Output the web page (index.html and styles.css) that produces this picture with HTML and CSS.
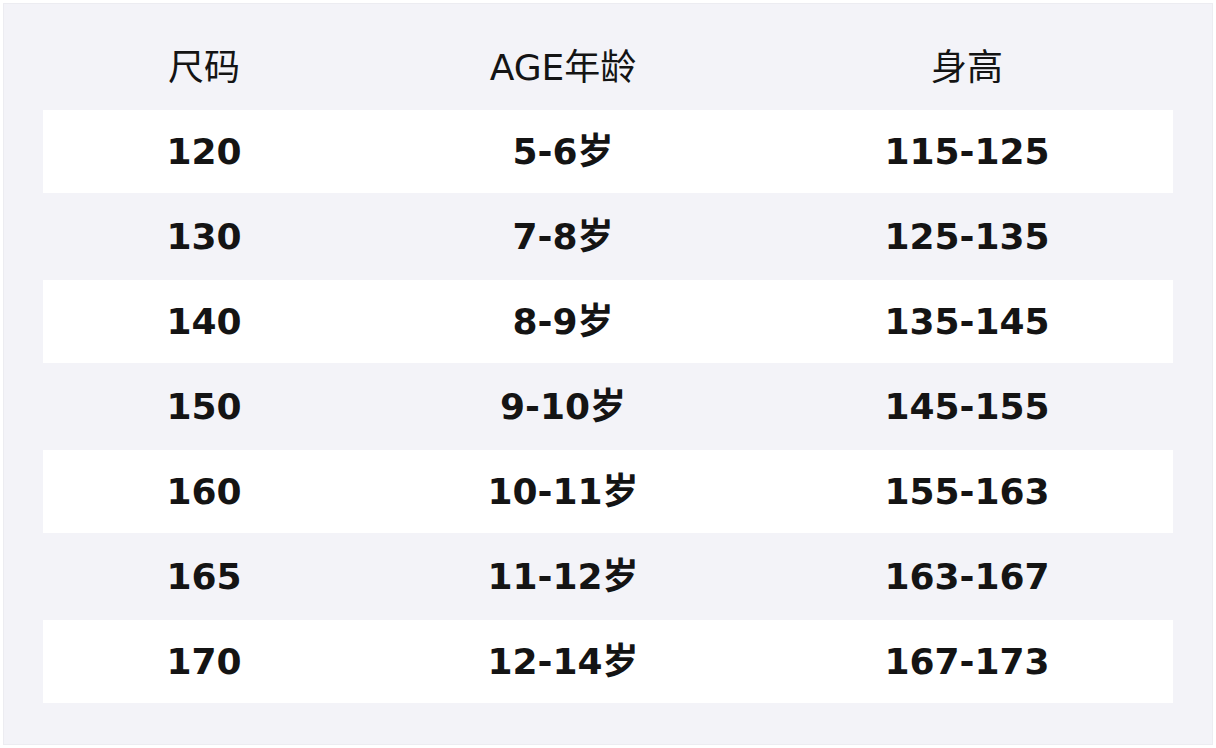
FILE: index.html
```html
<!DOCTYPE html>
<html lang="zh-CN">
<head>
<meta charset="utf-8">
<link rel="stylesheet" href="styles.css">
</head>
<body>
<div class="panel">
  <div class="row head">
    <div class="cell">尺码</div>
    <div class="cell">AGE年龄</div>
    <div class="cell">身高</div>
  </div>
  <div class="row odd"><div class="cell">120</div><div class="cell">5-6岁</div><div class="cell">115-125</div></div>
  <div class="row"><div class="cell">130</div><div class="cell">7-8岁</div><div class="cell">125-135</div></div>
  <div class="row odd"><div class="cell">140</div><div class="cell">8-9岁</div><div class="cell">135-145</div></div>
  <div class="row"><div class="cell">150</div><div class="cell">9-10岁</div><div class="cell">145-155</div></div>
  <div class="row odd"><div class="cell">160</div><div class="cell">10-11岁</div><div class="cell">155-163</div></div>
  <div class="row"><div class="cell">165</div><div class="cell">11-12岁</div><div class="cell">163-167</div></div>
  <div class="row odd"><div class="cell">170</div><div class="cell">12-14岁</div><div class="cell">167-173</div></div>
</div>
</body>
</html>
```
FILE: styles.css
```css
html, body {
  margin: 0;
  padding: 0;
  background: #ffffff;
}
body {
  padding: 3px;
  font-family: "DejaVu Sans", "Noto Sans CJK SC", sans-serif;
  color: #141414;
}
.panel {
  width: 1210px;
  height: 742px;
  box-sizing: border-box;
  background: #f3f3f8;
  border: 1px solid #ececf1;
  padding: 21px 39px 0 39px;
  display: flex;
  flex-direction: column;
  gap: 2px;
}
.row {
  display: grid;
  grid-template-columns: 322px 396px 412px;
  height: 83px;
  line-height: 83px;
  font-size: 36px;
  font-weight: bold;
}
.row.head {
  height: 85px;
  line-height: 85px;
  margin-bottom: -2px;
  font-weight: normal;
}
.row.odd {
  background: #ffffff;
}
.cell {
  text-align: center;
  white-space: nowrap;
}
```
